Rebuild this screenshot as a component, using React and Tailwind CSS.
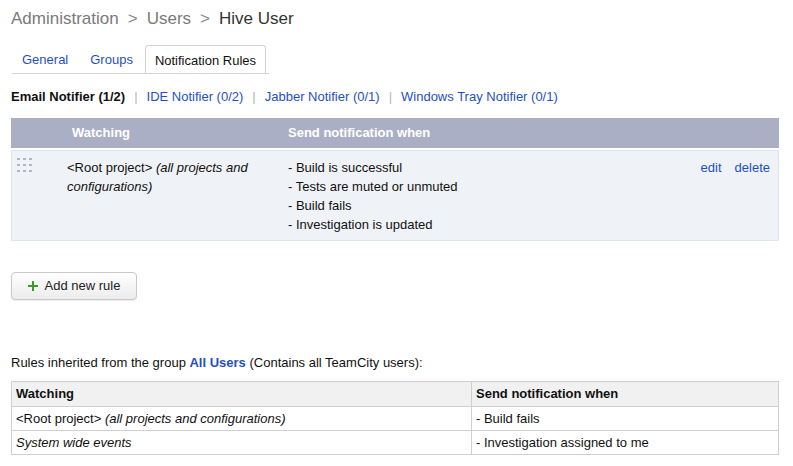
import React from 'react';

/* ─── Small drawings ─────────────────────────────────────────────────────── */

function DragHandle() {
  const dots = [];
  for (let r = 0; r < 3; r++) {
    for (let c = 0; c < 3; c++) {
      dots.push(<rect key={`${r}-${c}`} x={c * 6} y={r * 6} width="3" height="2" fill="#b3b7bd" />);
    }
  }
  return (
    <svg width="16" height="14" viewBox="0 0 16 14">
      {dots}
    </svg>
  );
}

function PlusIcon() {
  return (
    <svg width="10" height="10" viewBox="0 0 10 10">
      <rect x="4" y="0" width="2" height="10" fill="#3c9a2b" />
      <rect x="0" y="4" width="10" height="2" fill="#3c9a2b" />
    </svg>
  );
}

const notifiers = [
  { label: 'Email Notifier (1/2)', active: true },
  { label: 'IDE Notifier (0/2)' },
  { label: 'Jabber Notifier (0/1)' },
  { label: 'Windows Tray Notifier (0/1)' },
];

const events = ['- Build is successful', '- Tests are muted or unmuted', '- Build fails', '- Investigation is updated'];

export default function App() {
  return (
    <div className="min-h-screen bg-white text-[13px] text-[#111] pl-[11px]" style={{ fontFamily: '"Liberation Sans", Arial, Helvetica, sans-serif' }}>
      {/* Breadcrumb */}
      <div className="pt-[7px] text-[17px] leading-[23px] text-[#7a7a7a] flex items-center gap-[9px]">
        <span>Administration</span>
        <span className="text-[#8a8a8a]">&gt;</span>
        <span>Users</span>
        <span className="text-[#8a8a8a]">&gt;</span>
        <span className="text-[#333]">Hive User</span>
      </div>

      {/* Tabs */}
      <div className="mt-[16px] flex items-end w-[257px] ml-px border-b border-[#d4d4d4] h-[28px]">
        <span className="px-[10px] pt-[2px] leading-[26px] text-[#1f4fc6]">General</span>
        <span className="px-[12px] pt-[2px] leading-[26px] text-[#1f4fc6]">Groups</span>
        <span className="px-[9px] h-[28px] pt-[2px] leading-[26px] bg-white border border-b-0 border-[#d4d4d4] rounded-t-[3px] text-[#111]">Notification Rules</span>
      </div>

      {/* Notifier switcher */}
      <div className="mt-[13px] flex items-center leading-[19px]">
        {notifiers.map((n, i) => (
          <React.Fragment key={n.label}>
            {i > 0 && <span className="mx-[9px] text-[#b5b5b5]">|</span>}
            <span className={n.active ? 'font-bold text-[#111]' : 'text-[#1f4fc6]'}>{n.label}</span>
          </React.Fragment>
        ))}
      </div>

      {/* Own rules */}
      <div className="mt-[12px] w-[768px]">
        <div className="grid grid-cols-[61px_216px_1fr] h-[30px] items-center bg-[#abafc6] text-white font-bold">
          <span />
          <span>Watching</span>
          <span>Send notification when</span>
        </div>
        <div className="mt-[2px] grid grid-cols-[55px_221px_1fr_auto] bg-[#eff2f6] border border-[#dde4ee] pt-[7px] pb-[6px] leading-[19px]">
          <div className="pl-[5px]">
            <DragHandle />
          </div>
          <div className="pr-[10px]">
            &lt;Root project&gt; <i>(all projects and configurations)</i>
          </div>
          <div>
            {events.map((e) => (
              <div key={e}>{e}</div>
            ))}
          </div>
          <div className="flex gap-[13px] pr-[8px] text-[#1f4fc6]">
            <span>edit</span>
            <span>delete</span>
          </div>
        </div>
      </div>

      {/* Add button */}
      <button className="mt-[31px] w-[126px] h-[28px] flex items-center justify-center gap-[7px] rounded-[4px] border border-[#c8c8c8] bg-gradient-to-b from-white to-[#ececec] text-[#222] text-[13px] shadow-[0_1px_1px_rgba(0,0,0,0.08)]">
        <PlusIcon />
        <span>Add new rule</span>
      </button>

      {/* Inherited rules */}
      <div className="mt-[53px] leading-[19px]">
        Rules inherited from the group <span className="font-bold text-[#1f4fc6]">All Users</span> (Contains all TeamCity users):
      </div>

      <div className="mt-[9px] w-[768px] border border-[#cfcfcf]">
        <div className="grid grid-cols-[460px_1fr] h-[24px] bg-[#f1f1f1] font-bold">
          <div className="pl-[4px] leading-[24px] border-r border-[#cfcfcf]">Watching</div>
          <div className="pl-[4px] leading-[24px]">Send notification when</div>
        </div>
        <div className="grid grid-cols-[460px_1fr] h-[24px] border-t border-[#cfcfcf]">
          <div className="pl-[4px] leading-[23px] border-r border-[#cfcfcf]">
            &lt;Root project&gt; <i>(all projects and configurations)</i>
          </div>
          <div className="pl-[4px] leading-[23px]">- Build fails</div>
        </div>
        <div className="grid grid-cols-[460px_1fr] h-[24px] border-t border-[#cfcfcf]">
          <div className="pl-[4px] leading-[23px] border-r border-[#cfcfcf] italic">System wide events</div>
          <div className="pl-[4px] leading-[23px]">- Investigation assigned to me</div>
        </div>
      </div>
    </div>
  );
}
